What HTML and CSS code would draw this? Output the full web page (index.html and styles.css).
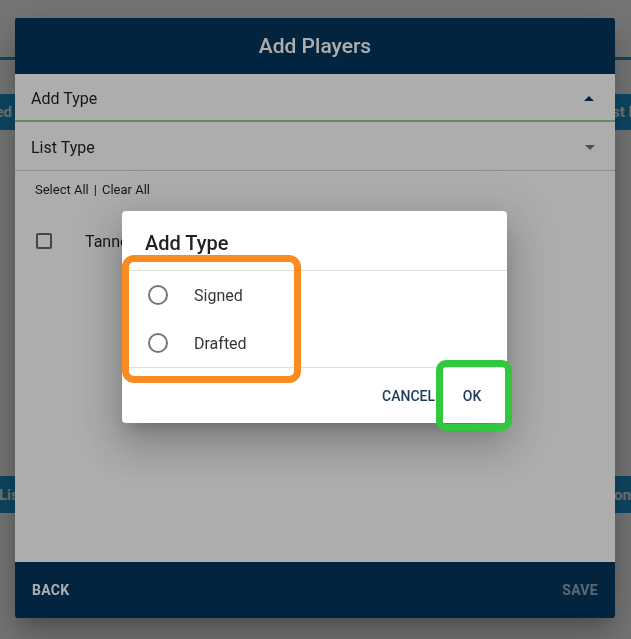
FILE: index.html
```html
<!DOCTYPE html>
<html lang="en">
<head>
    <meta charset="UTF-8">
    <meta name="viewport" content="width=device-width, initial-scale=1.0">
    <title>Add Players</title>
    <link rel="stylesheet" href="styles.css">
</head>
<body>
    <!-- Roster page underneath the dialogs -->
    <div class="page">
        <div class="page-rule"></div>
        <div class="page-band band-top">
            <span class="band-left">Signed</span>
            <span class="band-right">List Players</span>
        </div>
        <div class="page-band band-bottom">
            <span class="band-left band-left-wide">List</span>
            <span class="band-right band-right-end">Position</span>
        </div>
    </div>

    <div class="backdrop">
        <div class="dialog">
            <header class="dialog-header">Add Players</header>

            <div class="dialog-body">
                <div class="field field-open">
                    <span>Add Type</span>
                    <span class="caret caret-up"></span>
                </div>
                <div class="field field-closed">
                    <span>List Type</span>
                    <span class="caret"></span>
                </div>
                <div class="bulk">
                    <span>Select All</span>
                    <span class="bulk-sep">|</span>
                    <span>Clear All</span>
                </div>
                <div class="player">
                    <span class="checkbox"></span>
                    <span>Tanner Houck</span>
                </div>
            </div>

            <footer class="dialog-footer">
                <button class="footer-btn">BACK</button>
                <button class="footer-btn" disabled>SAVE</button>
            </footer>
        </div>
    </div>

    <div class="backdrop picker-backdrop">
        <div class="picker">
            <div class="picker-title">Add Type</div>
            <div class="picker-options">
                <label class="option"><span class="radio"></span>Signed</label>
                <label class="option"><span class="radio"></span>Drafted</label>
            </div>
            <div class="picker-actions">
                <button class="action action-cancel">CANCEL</button>
                <button class="action">OK</button>
            </div>

            <!-- highlight marks -->
            <div class="mark mark-orange"></div>
            <div class="mark mark-green"></div>
        </div>
    </div>
</body>
</html>
```

FILE: styles.css
```css
body {
    margin: 0;
    height: 639px;
    overflow: hidden;
    background: #fff;
    font-family: Roboto, 'Noto Sans', sans-serif;
}

.page {
    height: 100vh;
    padding-top: 57px;
    box-sizing: border-box;
}

.page-rule {
    height: 3px;
    background: #1f9ad6;
}

.page-band {
    display: flex;
    justify-content: space-between;
    align-items: center;
    height: 36px;
    background: #1f9ad6;
    color: #fff;
    font-size: 15px;
    font-weight: 700;
    white-space: nowrap;
}

.band-top {
    margin-top: 34px;
}

.band-bottom {
    margin-top: 346px;
    height: 37px;
}

.band-left {
    display: flex;
    justify-content: flex-end;
    width: 12px;
}

.band-left-wide {
    justify-content: flex-start;
    width: 15px;
    margin-left: -1px;
}

.band-right {
    width: 31px;
    overflow: hidden;
}

.band-right-end {
    display: flex;
    justify-content: flex-end;
    width: 19px;
}

.backdrop {
    position: fixed;
    inset: 0;
    display: flex;
    justify-content: center;
    align-items: flex-start;
    padding: 18px 1px 0 0;
    background: rgba(0, 0, 0, 0.32);
}

.dialog {
    display: flex;
    flex-direction: column;
    width: 600px;
    height: 600px;
    background: #fff;
    border-radius: 2px;
    overflow: hidden;
    box-shadow: 0 11px 15px -7px rgba(0, 0, 0, 0.2),
                0 24px 38px 3px rgba(0, 0, 0, 0.14),
                0 9px 46px 8px rgba(0, 0, 0, 0.12);
}

.dialog-header {
    display: flex;
    align-items: center;
    justify-content: center;
    flex-shrink: 0;
    height: 56px;
    background: #04355d;
    color: #fff;
    font-size: 21px;
    font-weight: 500;
}

.dialog-body {
    flex: 1;
}

.field {
    display: flex;
    align-items: center;
    justify-content: space-between;
    height: 48px;
    box-sizing: border-box;
    padding: 2px 20px 0 16px;
    font-size: 16px;
    color: rgba(0, 0, 0, 0.87);
}

.field-open {
    border-bottom: 2px solid #84d49d;
    padding-right: 21px;
}

.field-closed {
    height: 49px;
    border-bottom: 1px solid #d2d2d2;
}

.caret {
    width: 0;
    height: 0;
    border-left: 5px solid transparent;
    border-right: 5px solid transparent;
    border-top: 5px solid rgba(0, 0, 0, 0.54);
}

.caret-up {
    border-top: 0;
    border-bottom: 5px solid #15324f;
}

.bulk {
    display: flex;
    align-items: center;
    height: 34px;
    box-sizing: border-box;
    padding: 2px 0 0 20px;
    font-size: 13px;
    color: rgba(0, 0, 0, 0.87);
}

.bulk-sep {
    margin: 0 5px;
}

.player {
    display: flex;
    align-items: center;
    height: 72px;
    padding-left: 21px;
    font-size: 16px;
    color: rgba(0, 0, 0, 0.87);
}

.checkbox {
    width: 16px;
    height: 16px;
    box-sizing: border-box;
    border: 2px solid rgba(0, 0, 0, 0.6);
    border-radius: 2px;
    margin-right: 33px;
}

.dialog-footer {
    display: flex;
    justify-content: space-between;
    align-items: center;
    flex-shrink: 0;
    height: 56px;
    padding: 0 17px;
    background: #04355d;
}

.footer-btn {
    padding: 0;
    border: 0;
    background: none;
    color: #fff;
    font-family: Roboto, sans-serif;
    font-size: 14px;
    font-weight: 700;
    letter-spacing: 0.3px;
}

.footer-btn:disabled {
    color: rgba(255, 255, 255, 0.5);
}

.picker-backdrop {
    padding-top: 211px;
}

.picker {
    position: relative;
    width: 385px;
    margin-right: 1px;
    background: #fff;
    border-radius: 4px;
    box-shadow: 0 11px 15px -7px rgba(0, 0, 0, 0.2),
                0 24px 38px 3px rgba(0, 0, 0, 0.14),
                0 9px 46px 8px rgba(0, 0, 0, 0.12);
}

.picker-title {
    padding: 20px 23px 15px;
    line-height: 24px;
    font-size: 20px;
    font-weight: 500;
    color: rgba(0, 0, 0, 0.87);
    border-bottom: 1px solid #e0e0e0;
}

.option {
    display: flex;
    align-items: center;
    height: 48px;
    padding-left: 26px;
    font-size: 16px;
    color: rgba(0, 0, 0, 0.8);
}

.radio {
    width: 20px;
    height: 20px;
    box-sizing: border-box;
    border: 2px solid rgba(0, 0, 0, 0.54);
    border-radius: 50%;
    margin-right: 26px;
}

.picker-actions {
    display: flex;
    justify-content: flex-end;
    align-items: center;
    height: 55px;
    padding-right: 3px;
    border-top: 1px solid #e0e0e0;
}

.action {
    min-width: 64px;
    height: 36px;
    padding: 0 8px;
    border: 0;
    background: none;
    color: #1d3a5a;
    font-family: Roboto, sans-serif;
    font-size: 14px;
    font-weight: 500;
}

.action-cancel {
    padding: 0 5px 0 11px;
}

.mark {
    position: absolute;
    box-sizing: border-box;
    border: 7px solid;
    border-radius: 12px;
    pointer-events: none;
}

.mark-orange {
    left: 0;
    top: 44px;
    width: 179px;
    height: 128px;
    border-color: #f98b22;
}

.mark-green {
    left: 314px;
    top: 149px;
    width: 76px;
    height: 71px;
    border-color: #33c73f;
    border-radius: 10px;
}
```
